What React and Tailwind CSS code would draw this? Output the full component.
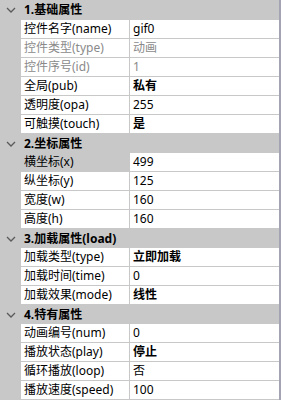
import React from "react";

const sections = [
  {
    title: "1.基础属性",
    rows: [
      { label: "控件名字(name)", value: "gif0" },
      { label: "控件类型(type)", value: "动画", disabled: true },
      { label: "控件序号(id)", value: "1", disabled: true },
      { label: "全局(pub)", value: "私有", bold: true },
      { label: "透明度(opa)", value: "255" },
      { label: "可触摸(touch)", value: "是", bold: true },
    ],
  },
  {
    title: "2.坐标属性",
    rows: [
      { label: "横坐标(x)", value: "499", selected: true },
      { label: "纵坐标(y)", value: "125" },
      { label: "宽度(w)", value: "160" },
      { label: "高度(h)", value: "160" },
    ],
  },
  {
    title: "3.加载属性(load)",
    rows: [
      { label: "加载类型(type)", value: "立即加载", bold: true },
      { label: "加载时间(time)", value: "0" },
      { label: "加载效果(mode)", value: "线性", bold: true },
    ],
  },
  {
    title: "4.特有属性",
    rows: [
      { label: "动画编号(num)", value: "0" },
      { label: "播放状态(play)", value: "停止", bold: true },
      { label: "循环播放(loop)", value: "否" },
      { label: "播放速度(speed)", value: "100" },
    ],
  },
];

function Chevron() {
  return (
    <svg width="10" height="6" viewBox="0 0 10 6" className="block">
      <path d="M1 1 L5 5 L9 1" fill="none" stroke="#5a5a5a" strokeWidth="1.3" />
    </svg>
  );
}

export default function App() {
  return (
    <div
      className="w-[281px] h-[400px] overflow-hidden bg-[#c8c8c8] border-r-2 border-[#a3a3b3] text-[12px] leading-none text-black"
      style={{ fontFamily: '"Noto Sans", "Noto Sans CJK SC", sans-serif' }}
    >
      {sections.map((sec, i) => (
        <div key={sec.title}>
          <div className={`flex items-center ${i === 0 ? "h-[20px]" : "h-[19px]"}`}>
            <div className="w-[21px] flex justify-center pl-[1px]">
              <Chevron />
            </div>
            <span className="pl-[3px] font-bold">{sec.title}</span>
          </div>
          {sec.rows.map((row) => (
            <div key={row.label} className="flex h-[19px]">
              <div className="w-[21px] shrink-0" />
              <div
                className={`w-[109px] shrink-0 flex items-center pl-[3px] border-b border-r border-[#c8c8c8] ${
                  row.selected ? "bg-[#c8c8c8]" : "bg-white"
                } ${row.disabled ? "text-[#8a8a8a]" : ""}`}
              >
                {row.label}
              </div>
              <div
                className={`flex-1 flex items-center pl-[3px] bg-white border-b border-[#c8c8c8] ${
                  row.disabled ? "text-[#8a8a8a]" : ""
                } ${row.bold ? "font-bold" : ""}`}
              >
                {row.value}
              </div>
            </div>
          ))}
        </div>
      ))}
    </div>
  );
}
